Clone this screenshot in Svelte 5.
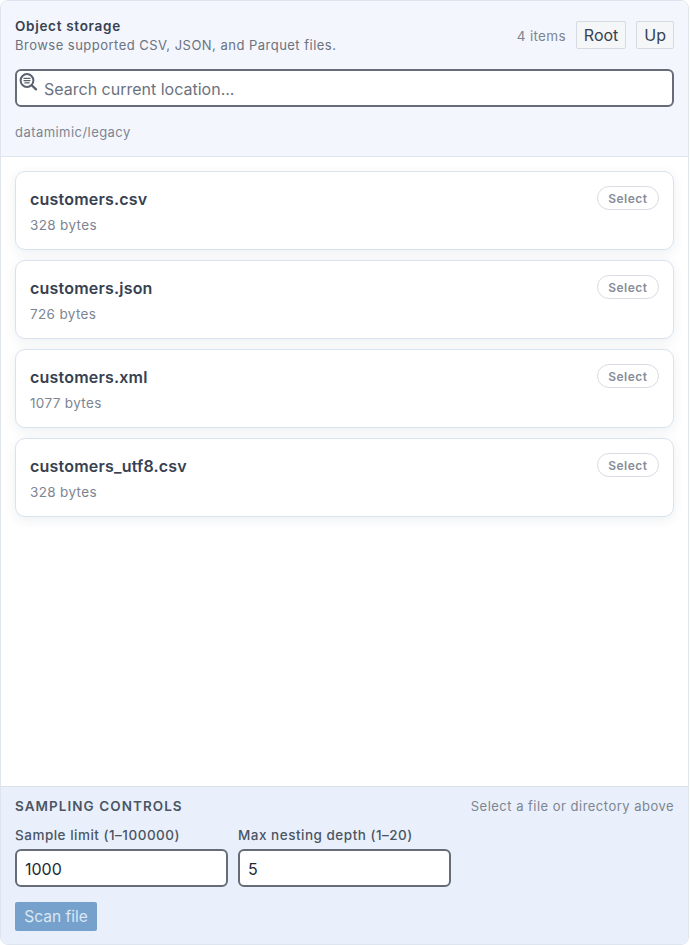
<script lang="ts">
    interface FileItem {
        name: string;
        size: number;
    }

    const files: FileItem[] = [
        { name: 'customers.csv', size: 328 },
        { name: 'customers.json', size: 726 },
        { name: 'customers.xml', size: 1077 },
        { name: 'customers_utf8.csv', size: 328 }
    ];
</script>

<main class="panel">
    <header class="head">
        <div class="head-row">
            <div>
                <h1>Object storage</h1>
                <p class="sub">Browse supported CSV, JSON, and Parquet files.</p>
            </div>
            <div class="actions">
                <span class="count">{files.length} items</span>
                <button class="ghost">Root</button>
                <button class="ghost">Up</button>
            </div>
        </div>
        <div class="search">
            <svg class="search-icon" viewBox="0 0 20 20" width="20" height="20" fill="none" stroke="#5a6270" stroke-linecap="round">
                <circle cx="9" cy="8.5" r="6.4" stroke-width="2" />
                <path d="M6 6.4h6M6 8.6h6M6.8 10.8h4.4" stroke-width="1.2" />
                <path d="M14 13.5l4 3.8" stroke-width="2.4" />
            </svg>
            <input type="text" placeholder="Search current location..." />
        </div>
        <div class="path">datamimic/legacy</div>
    </header>

    <section class="list">
        {#each files as file}
            <div class="card">
                <div>
                    <div class="file-name">{file.name}</div>
                    <div class="file-size">{file.size} bytes</div>
                </div>
                <button class="select">Select</button>
            </div>
        {/each}
    </section>

    <footer class="controls">
        <div class="controls-head">
            <h2>Sampling controls</h2>
            <span class="hint">Select a file or directory above</span>
        </div>
        <div class="fields">
            <label>
                <span>Sample limit (1–100000)</span>
                <input type="text" value="1000" />
            </label>
            <label>
                <span>Max nesting depth (1–20)</span>
                <input type="text" value="5" />
            </label>
        </div>
        <button class="scan">Scan file</button>
    </footer>
</main>

<style>
    :global(body) {
        margin: 0;
        background: #fff;
    }

    .panel {
        box-sizing: border-box;
        width: 689px;
        height: 945px;
        display: flex;
        flex-direction: column;
        border: 1px solid #dfe5ee;
        border-radius: 8px;
        overflow: hidden;
        font-family: Inter, "Liberation Sans", sans-serif;
        color: #374151;
    }

    .head {
        height: 156px;
        box-sizing: border-box;
        padding: 17px 14px 0;
        background: #f3f6fc;
        border-bottom: 1px solid #dfe5ee;
    }

    .head-row {
        display: flex;
        justify-content: space-between;
        align-items: flex-start;
    }

    h1 {
        margin: 0;
        font-size: 13.5px;
        line-height: 17px;
        font-weight: 600;
        letter-spacing: 0.7px;
        color: #374151;
    }

    .sub {
        margin: 2px 0 0;
        font-size: 13px;
        line-height: 16px;
        letter-spacing: 0.48px;
        color: #6b7280;
    }

    .actions {
        display: flex;
        align-items: center;
        margin-top: 3px;
    }

    .count {
        font-size: 13.5px;
        line-height: 20px;
        padding-top: 1px;
        letter-spacing: 0.3px;
        color: #7d8592;
        margin-right: 10px;
    }

    .ghost {
        height: 28px;
        box-sizing: border-box;
        padding: 0 7px;
        background: #f5f6f8;
        border: 1px solid #d6dae1;
        border-radius: 2px;
        font: 16px Inter, "Liberation Sans", sans-serif;
        color: #374151;
    }

    .ghost + .ghost {
        margin-left: 10px;
    }

    .search {
        position: relative;
        margin-top: 16px;
    }

    .search-icon {
        position: absolute;
        left: 3px;
        top: 3px;
    }

    input {
        display: block;
        width: 100%;
        box-sizing: border-box;
        height: 38px;
        background: #fff;
        border: 2px solid #666c78;
        border-radius: 6px;
        font: 16px Inter, "Liberation Sans", sans-serif;
        color: #1f2937;
        outline: none;
    }

    .search input {
        padding: 2px 10px 0 27px;
    }

    input::placeholder {
        color: #6b7280;
        opacity: 1;
    }

    .path {
        margin-top: 17px;
        font-size: 13px;
        line-height: 16px;
        letter-spacing: 0.45px;
        color: #7d8592;
    }

    .list {
        flex: 1;
        padding: 14px 14px 0;
        display: flex;
        flex-direction: column;
        gap: 10px;
        background: #fff;
    }

    .card {
        box-sizing: border-box;
        height: 79px;
        padding: 17px 14px 0;
        display: flex;
        justify-content: space-between;
        align-items: flex-start;
        border: 1px solid #d9e2ef;
        border-radius: 10px;
        background: #fff;
        box-shadow: 0 3px 12px rgba(30, 50, 90, 0.08);
    }

    .file-name {
        font-size: 16px;
        line-height: 21px;
        font-weight: 600;
        letter-spacing: 0.2px;
        color: #374151;
    }

    .file-size {
        margin-top: 6px;
        font-size: 13.5px;
        line-height: 18px;
        letter-spacing: 0.35px;
        color: #7d8592;
    }

    .select {
        height: 24px;
        box-sizing: border-box;
        padding: 0 10.5px;
        margin-top: -3px;
        background: #fff;
        border: 1px solid #d9dce2;
        border-radius: 12px;
        font: 600 12px Inter, "Liberation Sans", sans-serif;
        letter-spacing: 0.5px;
        color: #878d99;
    }

    .controls {
        height: 158px;
        box-sizing: border-box;
        padding: 11px 14px 0;
        background: #e9f0fb;
        border-top: 1px solid #d9e0ea;
    }

    .controls-head {
        display: flex;
        justify-content: space-between;
        align-items: flex-start;
    }

    h2 {
        margin: 0;
        font-size: 13.5px;
        line-height: 17px;
        font-weight: 600;
        letter-spacing: 1.05px;
        text-transform: uppercase;
        color: #4b5563;
    }

    .hint {
        font-size: 13px;
        line-height: 16px;
        letter-spacing: 0.48px;
        color: #7d8592;
    }

    .fields {
        display: flex;
        gap: 10px;
        margin-top: 12px;
    }

    label {
        width: 213px;
        display: block;
    }

    label span {
        display: block;
        font-size: 13.5px;
        line-height: 17px;
        font-weight: 500;
        letter-spacing: 0.5px;
        white-space: nowrap;
        color: #4b5563;
        margin-bottom: 5px;
    }

    label input {
        padding: 2px 8px 0;
    }

    .scan {
        display: block;
        margin-top: 15px;
        height: 29px;
        width: 82px;
        padding: 0;
        border: none;
        border-radius: 2px;
        background: #76a1cc;
        font: 15.5px Inter, "Liberation Sans", sans-serif;
        color: #dbe7f3;
    }
</style>
